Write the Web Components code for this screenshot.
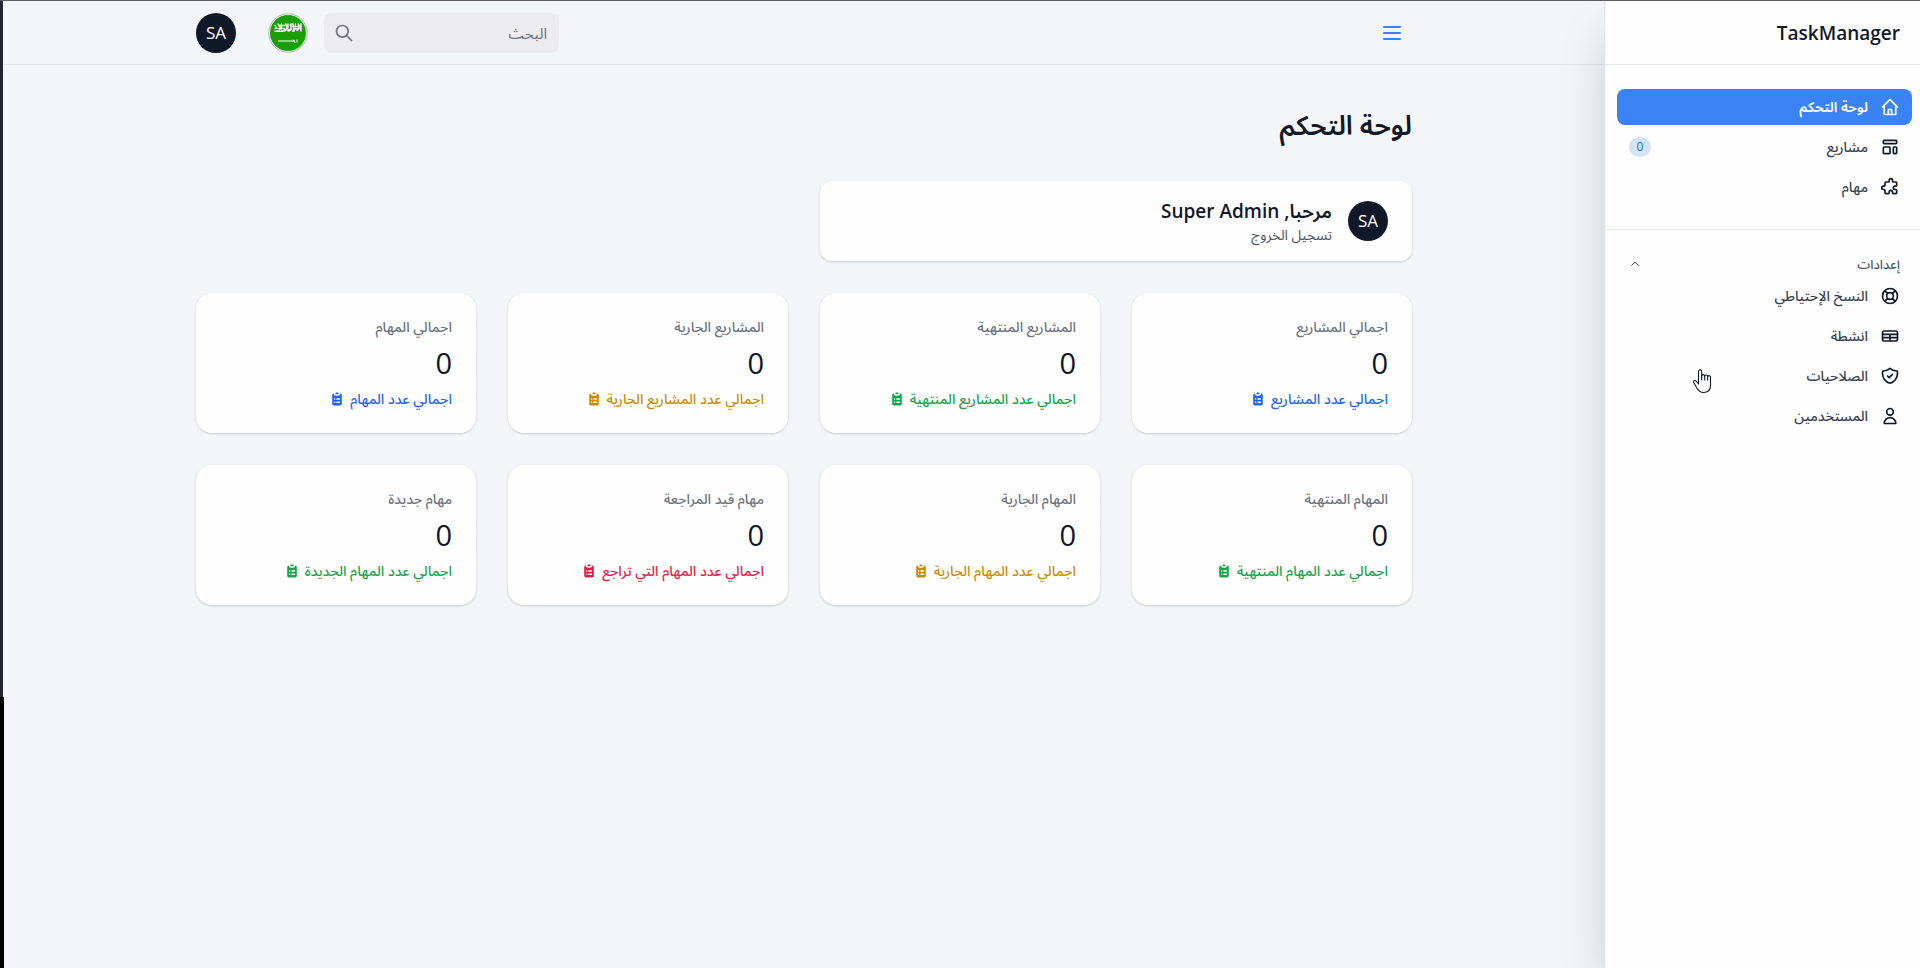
<!DOCTYPE html>
<html lang="ar" dir="rtl">
<head>
<meta charset="utf-8">
<meta name="viewport" content="width=device-width, initial-scale=1">
<title>لوحة التحكم - TaskManager</title>
<style>
  html { height: 100%; }
  body {
    margin: 0;
    min-height: 100%;
    display: flex;
    box-sizing: border-box;
    border-top: 1px solid #5f5e62;
    background: #f4f5f8;
    color: #111827;
    font-family: "Open Sans", "Noto Sans Arabic", "Noto Sans", sans-serif;
    font-size: 14px;
    line-height: 20px;
  }
</style>
</head>
<body>
<app-sidebar>
  <nav-item icon="home" active>لوحة التحكم</nav-item>
  <nav-item icon="template" badge="0">مشاريع</nav-item>
  <nav-item icon="puzzle">مهام</nav-item>
  <nav-group slot="groups" label="إعدادات">
    <nav-item icon="support">النسخ الإحتياطي</nav-item>
    <nav-item icon="table">انشطة</nav-item>
    <nav-item icon="shield">الصلاحيات</nav-item>
    <nav-item icon="user">المستخدمين</nav-item>
  </nav-group>
</app-sidebar>
<app-main>
  <top-bar slot="top"></top-bar>
  <welcome-card name="Super Admin"></welcome-card>
  <stats-grid>
    <stat-card label="اجمالي المشاريع" value="0" tone="primary">اجمالي عدد المشاريع</stat-card>
    <stat-card label="المشاريع المنتهية" value="0" tone="success">اجمالي عدد المشاريع المنتهية</stat-card>
    <stat-card label="المشاريع الجارية" value="0" tone="warning">اجمالي عدد المشاريع الجارية</stat-card>
    <stat-card label="اجمالي المهام" value="0" tone="primary">اجمالي عدد المهام</stat-card>
    <stat-card label="المهام المنتهية" value="0" tone="success">اجمالي عدد المهام المنتهية</stat-card>
    <stat-card label="المهام الجارية" value="0" tone="warning">اجمالي عدد المهام الجارية</stat-card>
    <stat-card label="مهام قيد المراجعة" value="0" tone="danger">اجمالي عدد المهام التي تراجع</stat-card>
    <stat-card label="مهام جديدة" value="0" tone="success">اجمالي عدد المهام الجديدة</stat-card>
  </stats-grid>
</app-main>
<screen-edge></screen-edge>
<hand-pointer></hand-pointer>

<script>
const ICONS = {
  home: 'M3 12l2-2m0 0l7-7 7 7M5 10v10a1 1 0 001 1h3m10-11l2 2m-2-2v10a1 1 0 01-1 1h-3m-6 0a1 1 0 001-1v-4a1 1 0 011-1h2a1 1 0 011 1v4a1 1 0 001 1m-6 0h6',
  template: 'M4 5a1 1 0 011-1h14a1 1 0 011 1v2a1 1 0 01-1 1H5a1 1 0 01-1-1V5zM4 13a1 1 0 011-1h6a1 1 0 011 1v6a1 1 0 01-1 1H5a1 1 0 01-1-1v-6zM16 13a1 1 0 011-1h2a1 1 0 011 1v6a1 1 0 01-1 1h-2a1 1 0 01-1-1v-6z',
  puzzle: 'M11 4a2 2 0 114 0v1a1 1 0 001 1h3a1 1 0 011 1v3a1 1 0 01-1 1h-1a2 2 0 100 4h1a1 1 0 011 1v3a1 1 0 01-1 1h-3a1 1 0 01-1-1v-1a2 2 0 10-4 0v1a1 1 0 01-1 1H7a1 1 0 01-1-1v-3a1 1 0 00-1-1H4a2 2 0 110-4h1a1 1 0 001-1V7a1 1 0 011-1h3a1 1 0 001-1V4z',
  support: 'M18.364 5.636l-3.536 3.536m0 5.656l3.536 3.536M9.172 9.172L5.636 5.636m3.536 9.192l-3.536 3.536M21 12a9 9 0 11-18 0 9 9 0 0118 0zm-5 0a4 4 0 11-8 0 4 4 0 018 0z',
  table: 'M3 10h18M3 14h18m-9-4v8m-7 0h14a2 2 0 002-2V8a2 2 0 00-2-2H5a2 2 0 00-2 2v8a2 2 0 002 2z',
  shield: 'M9 12l2 2 4-4m5.618-4.016A11.955 11.955 0 0112 2.944a11.955 11.955 0 01-8.618 3.04A12.02 12.02 0 003 9c0 5.591 3.824 10.29 9 11.622 5.176-1.332 9-6.03 9-11.622 0-1.042-.133-2.052-.382-3.016z',
  user: 'M16 7a4 4 0 11-8 0 4 4 0 018 0zM12 14a7 7 0 00-7 7h14a7 7 0 00-7-7z',
  search: 'M21 21l-6-6m2-5a7 7 0 11-14 0 7 7 0 0114 0z',
  menu: 'M4 6h16M4 12h16M4 18h16',
  chevron: 'M5 15l7-7 7 7'
};
const icon = (name, size) =>
  `<svg width="${size}" height="${size}" viewBox="0 0 24 24" fill="none" stroke="currentColor" stroke-width="2" stroke-linecap="round" stroke-linejoin="round" aria-hidden="true"><path d="${ICONS[name]}"/></svg>`;

const RESET = `
  *, ::before, ::after { box-sizing: border-box; }
  svg { display: block; flex: none; }
  button, input { font: inherit; color: inherit; background: none; border: 0; padding: 0; margin: 0; }
  h1, h2, p, ul { margin: 0; padding: 0; }
`;

class Base extends HTMLElement {
  connectedCallback() {
    if (this.shadowRoot) return;
    this.attachShadow({ mode: 'open' }).innerHTML = `<style>${RESET}${this.css()}</style>${this.html()}`;
  }
}

customElements.define('app-sidebar', class extends Base {
  css() { return `
    :host { display: flex; flex-direction: column; flex: none; width: 316px; box-sizing: border-box;
      background: #fefefe; border-inline-end: 1px solid #e1e2e8; position: relative; z-index: 2;
      box-shadow: 0 25px 50px -12px rgba(0, 0, 0, .25); }
    header { height: 64px; display: flex; align-items: center; padding-inline: 20px 12px; border-bottom: 1px solid #e5e7eb; }
    a { color: #111827; text-decoration: none; font-size: 19px; line-height: 28px; font-weight: 600; }
    nav { padding-block: 24px; }
    .main { display: flex; flex-direction: column; gap: 4px; padding-inline: 8px 12px; }
    hr { border: 0; border-top: 1px solid #e5e7eb; margin: 24px 0; }
  `; }
  html() { return `
    <header><a href="#" dir="ltr">TaskManager</a></header>
    <nav><div class="main"><slot></slot></div><hr><slot name="groups"></slot></nav>
  `; }
});

customElements.define('nav-item', class extends Base {
  css() { return `
    :host { display: block; }
    a { display: flex; align-items: center; gap: 12px; height: 36px; padding-inline: 12px; border-radius: 8px;
      color: #111827; text-decoration: none; font-weight: 500; }
    a.active { background: #3b82f6; color: #fff; font-weight: 600; }
    .label { flex: 1; color: #374151; }
    .active .label { color: #fff; }
    .badge { width: 22px; height: 20px; border-radius: 10px; background: #d3e3f6; color: #2563eb;
      font-size: 12px; text-align: center; }
  `; }
  html() {
    const badge = this.getAttribute('badge');
    return `<a href="#" class="${this.hasAttribute('active') ? 'active' : ''}">${icon(this.getAttribute('icon'), 20)}
      <span class="label"><slot></slot></span>${badge ? `<span class="badge">${badge}</span>` : ''}</a>`;
  }
});

customElements.define('nav-group', class extends Base {
  css() { return `
    :host { display: block; padding-inline: 8px 12px; }
    button { display: flex; align-items: center; justify-content: space-between; width: 100%; height: 20px;
      padding-inline: 12px; font-size: 13px; line-height: 16px; font-weight: 500; color: #4b5563; }
    div { display: flex; flex-direction: column; gap: 4px; margin-top: 4px; }
  `; }
  html() { return `<button type="button" aria-expanded="true">${this.getAttribute('label')}${icon('chevron', 12)}</button>
    <div><slot></slot></div>`; }
});

customElements.define('app-main', class extends Base {
  css() { return `
    :host { display: flex; flex-direction: column; flex: 1; min-width: 0; }
    main { width: 100%; max-width: 1280px; margin: 0 auto; padding: 40px 32px; }
    h1 { font-size: 27px; line-height: 40px; font-weight: 600; margin-bottom: 36px; }
    .body { display: grid; gap: 32px; }
  `; }
  html() { return `<slot name="top"></slot><main><h1>لوحة التحكم</h1><div class="body"><slot></slot></div></main>`; }
});

customElements.define('user-avatar', class extends Base {
  css() { return `
    :host { display: grid; place-items: center; flex: none; width: 40px; height: 40px; border-radius: 50%;
      background: #111827; color: #fff; font-size: 17px; line-height: 24px; }
  `; }
  html() { return `<slot></slot>`; }
});

customElements.define('country-flag', class extends Base {
  css() { return `
    :host { display: block; flex: none; width: 40px; height: 40px; }
    button { display: block; width: 40px; height: 40px; border-radius: 50%; }
  `; }
  html() { return `<button type="button" aria-label="اللغة">
    <svg width="40" height="40" viewBox="0 0 40 40">
      <circle cx="20" cy="20" r="19.2" fill="#fff" stroke="#a9aebb" stroke-width="1"/>
      <circle cx="20" cy="20" r="18" fill="#1a9f06"/>
      <g fill="none" stroke="#fff" stroke-linecap="round" stroke-linejoin="round">
        <path stroke-width="1.3" d="M7 12.500l2 3M7 18q4 1 5-2v-4M10 11l1 2M13.500 11v7q3 1 3-2M15 12.500h2M18 11l1 4q-1 3-3 3M20 11v4M20 18q3 0 3-3v-4M22 12l2-1M25 11l1 7M27.500 11v4q-1 3-3 3M28.500 17q2 1 2-2v-4M31 12l2 6M33 11v7"/>
        <path stroke-width="1" d="M7 15.500h6M14 15l4 1.500M19 17l5-1M26 16l5-1M9 18.500h5M24 13.500h6"/>
        <path stroke-width="1" d="M10.500 28h16M25.500 27l1.500 2.500M29 27v2"/>
      </g>
    </svg></button>`; }
});

customElements.define('top-bar', class extends Base {
  css() { return `
    :host { display: block; border-bottom: 1px solid #e3e5ea; }
    header { display: flex; align-items: center; justify-content: space-between; height: 63px; max-width: 1280px;
      margin: 0 auto; padding-inline: 32px; }
    .menu { display: grid; place-items: center; width: 40px; height: 40px; color: #3b82f6; }
    .tools { display: flex; align-items: center; gap: 16px; }
    .search { display: flex; align-items: center; width: 235px; height: 40px; border-radius: 8px;
      background: #ebebf0; color: #6b7280; padding-inline: 12px 10px; }
    input { flex: 1; min-width: 0; height: 40px; font-size: 15px; outline: 0; }
    input::placeholder { color: #6b7280; opacity: 1; }
    input::-webkit-search-cancel-button { display: none; }
    user-avatar { margin-inline-start: 16px; }
  `; }
  html() { return `<header>
    <button class="menu" type="button" aria-label="القائمة">${icon('menu', 24)}</button>
    <div class="tools">
      <label class="search"><input type="search" placeholder="البحث" aria-label="البحث">${icon('search', 20)}</label>
      <country-flag></country-flag>
      <user-avatar>SA</user-avatar>
    </div></header>`; }
});

customElements.define('welcome-card', class extends Base {
  css() { return `
    :host { display: flex; align-items: center; gap: 16px; width: calc(50% - 16px); height: 80px; box-sizing: border-box;
      padding-inline: 24px; border-radius: 12px; background: #fefefe; box-shadow: 0 1px 3px rgba(0,0,0,.12), 0 1px 2px rgba(0,0,0,.06); }
    h2 { font-size: 19px; line-height: 28px; font-weight: 600; }
    button { display: block; color: #4b5563; line-height: 20px; }
  `; }
  html() { return `<user-avatar>SA</user-avatar><div><h2>مرحبا, ${this.getAttribute('name')}</h2>
    <button type="button">تسجيل الخروج</button></div>`; }
});

customElements.define('stats-grid', class extends Base {
  css() { return `:host { display: grid; grid-template-columns: repeat(4, minmax(0, 1fr)); gap: 32px; }`; }
  html() { return `<slot></slot>`; }
});

customElements.define('stat-card', class extends Base {
  css() { return `
    :host { display: grid; gap: 8px; padding: 24px; border-radius: 16px; background: #fefefe;
      box-shadow: 0 1px 3px rgba(0,0,0,.12), 0 1px 2px rgba(0,0,0,.06); }
    .label { color: #6b7280; font-weight: 500; }
    .value { font-size: 29px; line-height: 36px; }
    .note { display: flex; align-items: center; gap: 5px; font-weight: 500; color: #2563eb; }
    :host([tone=success]) .note { color: #16a34a; }
    :host([tone=warning]) .note { color: #ca8a04; }
    :host([tone=danger]) .note { color: #e11d48; }
  `; }
  html() { return `
    <p class="label">${this.getAttribute('label')}</p>
    <p class="value">${this.getAttribute('value')}</p>
    <p class="note"><span><slot></slot></span>
      <svg width="16" height="16" viewBox="0 0 20 20" fill="currentColor" aria-hidden="true"><path d="M9 2a1 1 0 000 2h2a1 1 0 100-2H9z"/><path fill-rule="evenodd" d="M4 5a2 2 0 012-2 3 3 0 003 3h2a3 3 0 003-3 2 2 0 012 2v11a2 2 0 01-2 2H6a2 2 0 01-2-2V5zm3 4a1 1 0 000 2h.01a1 1 0 100-2H7zm3 0a1 1 0 000 2h3a1 1 0 100-2h-3zm-3 4a1 1 0 100 2h.01a1 1 0 100-2H7zm3 0a1 1 0 100 2h3a1 1 0 100-2h-3z" clip-rule="evenodd"/></svg></p>`; }
});

customElements.define('screen-edge', class extends Base {
  css() { return `
    :host { display: flex; flex-direction: column; align-items: flex-end; flex: none; width: 4px; }
    .upper { flex: 72; width: 3px; background: #24262f; align-self: flex-end; }
    .lower { flex: 28; width: 4px; background: #000; }
  `; }
  html() { return `<div class="upper"></div><div class="lower"></div>`; }
});

customElements.define('hand-pointer', class extends Base {
  css() { return `:host { display: block; position: absolute; left: 1692px; top: 368px; z-index: 3; pointer-events: none; }`; }
  html() { return `<svg width="20" height="26" viewBox="0 0 20 26" fill="#fff" stroke="#111827" stroke-width="1.1" stroke-linejoin="round" stroke-linecap="round" aria-hidden="true">
    <path d="M6.500 16V3.500a1.600 1.600 0 013.200 0V8a1.500 1.500 0 013 .3 1.500 1.500 0 013 .5 1.400 1.400 0 012.800.7V17c0 4.500-2.500 7.500-7 7.500-3.500 0-5.300-2-7-5l-2.800-5c-.6-1.500 1-2.600 2.300-1.500z"/>
    <path fill="none" d="M9.700 7.500V12M12.700 8.500V12M15.700 9V12"/></svg>`; }
});
</script>
</body>
</html>
